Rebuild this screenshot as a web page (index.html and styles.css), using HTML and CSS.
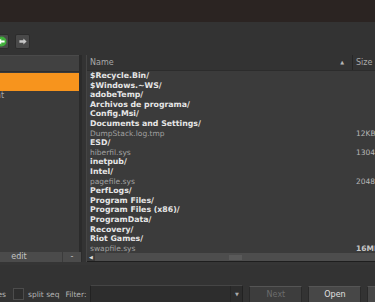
FILE: index.html
```html
<!DOCTYPE html>
<html lang="en">
<head>
  <meta charset="UTF-8" />
  <title>Open File</title>
  <link rel="stylesheet" href="styles.css">
</head>
<body>
  <div class="window">
    <div class="titlebar"></div>

    <!-- Navigation -->
    <div class="toolbar">
      <button class="nav-btn back">
        <svg width="11" height="11" viewBox="0 0 11 11">
          <circle cx="5.5" cy="5.5" r="5" fill="#3fae3a"/>
          <path d="M2.2 5.5 L5.2 2.6 L5.2 4.4 L8.6 4.4 L8.6 6.6 L5.2 6.6 L5.2 8.4 Z" fill="#fff"/>
        </svg>
      </button>
      <button class="nav-btn fwd">
        <svg width="8" height="7" viewBox="0 0 8 7">
          <path d="M7.6 3.5 L4.4 0.4 L4.4 2.3 L0.4 2.3 L0.4 4.7 L4.4 4.7 L4.4 6.6 Z" fill="#c8c8c8"/>
        </svg>
      </button>
    </div>

    <div class="main">
      <!-- Favourites -->
      <div class="places">
        <div class="places-head"></div>
        <div class="places-list">
          <div class="place selected">C:/</div>
          <div class="place">Current</div>
        </div>
        <div class="places-btns">
          <button class="small-btn add">+</button>
          <button class="small-btn edit">edit</button>
          <button class="small-btn remove">-</button>
        </div>
      </div>

      <!-- File list -->
      <div class="files">
        <div class="files-head">
          <div class="col-name">Name <span class="sort">&#9650;</span></div>
          <div class="col-size">Size</div>
        </div>
        <div class="rows">
          <div class="row dir"><span class="col-name">$Recycle.Bin/</span></div>
          <div class="row dir"><span class="col-name">$Windows.~WS/</span></div>
          <div class="row dir"><span class="col-name">adobeTemp/</span></div>
          <div class="row dir"><span class="col-name">Archivos de programa/</span></div>
          <div class="row dir"><span class="col-name">Config.Msi/</span></div>
          <div class="row dir"><span class="col-name">Documents and Settings/</span></div>
          <div class="row"><span class="col-name">DumpStack.log.tmp</span><span class="col-size">12KB</span></div>
          <div class="row dir"><span class="col-name">ESD/</span></div>
          <div class="row"><span class="col-name">hiberfil.sys</span><span class="col-size">1304MB</span></div>
          <div class="row dir"><span class="col-name">inetpub/</span></div>
          <div class="row dir"><span class="col-name">Intel/</span></div>
          <div class="row"><span class="col-name">pagefile.sys</span><span class="col-size">2048MB</span></div>
          <div class="row dir"><span class="col-name">PerfLogs/</span></div>
          <div class="row dir"><span class="col-name">Program Files/</span></div>
          <div class="row dir"><span class="col-name">Program Files (x86)/</span></div>
          <div class="row dir"><span class="col-name">ProgramData/</span></div>
          <div class="row dir"><span class="col-name">Recovery/</span></div>
          <div class="row dir"><span class="col-name">Riot Games/</span></div>
          <div class="row"><span class="col-name">swapfile.sys</span><span class="col-size big">16MB</span></div>
        </div>
        <div class="hscroll">
          <span class="hscroll-arrow">&#9664;</span>
          <span class="hscroll-grip"></span>
        </div>
      </div>
    </div>

    <!-- Bottom bar -->
    <div class="footer">
      <div class="footer-row">
        <span class="label hidden-label">show hidden files</span>
        <span class="checkbox"></span>
        <span class="label">split seq</span>
        <span class="label filter-label">Filter:</span>
        <div class="combo">
          <span class="combo-arrow">&#9660;</span>
        </div>
        <button class="btn disabled">Next</button>
        <button class="btn">Open</button>
        <button class="btn">Cancel</button>
      </div>
    </div>
  </div>
</body>
</html>
```

FILE: styles.css
```css
* {
  box-sizing: border-box;
  margin: 0;
  padding: 0;
}

html, body {
  width: 375px;
  height: 302px;
  overflow: hidden;
}

body {
  font-family: "DejaVu Sans", Verdana, sans-serif;
  font-size: 8px;
  background: #333;
  color: #c8c8c8;
}

button {
  font-family: inherit;
  font-size: 8px;
  border: none;
  background: none;
  color: inherit;
}

.window {
  margin-left: -40px;
  width: 415px;
}

.titlebar {
  height: 22px;
  background: #2b2422;
}

.toolbar {
  height: 30px;
  display: flex;
  align-items: flex-start;
  gap: 6px;
  padding: 12px 0 0 34px;
  background: #333;
}

.nav-btn {
  width: 15px;
  height: 15px;
  display: flex;
  align-items: center;
  justify-content: center;
  background: #494949;
  border: 1px solid #2c2c2c;
  border-radius: 2px;
}

.main {
  height: 210px;
  display: flex;
  padding-top: 3px;
}

/* left favourites */
.places {
  width: 122px;
  flex-shrink: 0;
  display: flex;
  flex-direction: column;
  background: #3b3b3b;
  border-right: 3px solid #2b2b2b;
}

.places-head {
  height: 17px;
  background: #414141;
  border-top: 1px solid #4a4a4a;
  border-bottom: 1px solid #2e2e2e;
}

.places-list {
  flex: 1;
}

.place {
  height: 10px;
  line-height: 10px;
  padding-left: 14px;
  color: #a8a8a8;
}

.place.selected {
  height: 18px;
  margin-top: 1px;
  line-height: 18px;
  background: #f7941d;
  color: #222;
}

.places-btns {
  height: 10px;
  display: flex;
  gap: 1px;
}

.small-btn {
  height: 10px;
  line-height: 10px;
  flex-shrink: 0;
  background: #4b4b4b;
  color: #c4c4c4;
}

.small-btn.add {
  width: 15px;
}

.small-btn.edit {
  width: 86px;
}

.small-btn.remove {
  width: 18px;
}

/* file list */
.files {
  flex: 1;
  display: flex;
  flex-direction: column;
  margin-left: 4px;
  background: #3b3b3b;
  border-left: 1px solid #454545;
}

.files-head {
  height: 16px;
  display: flex;
  background: #333;
  border-bottom: 1px solid #2c2c2c;
  color: #a9a9a9;
}

.files-head .col-name {
  position: relative;
  line-height: 15px;
  border-right: 1px solid #262626;
}

.sort {
  position: absolute;
  right: 8px;
  top: 0;
  font-size: 5px;
  color: #b8b8b8;
}

.files-head .col-size {
  line-height: 15px;
}

.col-name {
  width: 266px;
  flex-shrink: 0;
  padding-left: 3px;
}

.col-size {
  padding-left: 3px;
}

.rows {
  flex: 1;
}

.row {
  display: flex;
  height: 9.6px;
  line-height: 9.6px;
  white-space: nowrap;
  color: #a0a0a0;
  font-size: 7.5px;
}

.row.dir {
  font-weight: bold;
  font-size: 7.8px;
  color: #e6e6e6;
}

.row .col-size {
  color: #b8b8b8;
}

.row .col-size.big {
  font-weight: bold;
  color: #c8c8c8;
}

.hscroll {
  position: relative;
  height: 9px;
  background: #4d4d4d;
  border-bottom: 1px solid #1e1e1e;
}

.hscroll-arrow {
  display: block;
  width: 8px;
  height: 8px;
  line-height: 8px;
  font-size: 5px;
  text-align: center;
  background: #3a3a3a;
  color: #ddd;
}

.hscroll-grip {
  position: absolute;
  left: 142px;
  top: 2px;
  width: 13px;
  height: 5px;
  background-image: radial-gradient(circle, #6a6a6a 0.6px, transparent 0.8px);
  background-size: 2px 2px;
}

/* bottom bar */
.footer {
  height: 40px;
  border-top: 3px solid #353535;
  background: #333;
  padding-top: 20px;
}

.footer-row {
  display: flex;
  align-items: center;
  height: 18px;
  white-space: nowrap;
}

.footer-row > * {
  flex-shrink: 0;
}

.label {
  color: #b4b4b4;
  font-size: 7.5px;
}

.hidden-label {
  width: 46px;
  overflow: hidden;
  text-align: right;
  direction: rtl;
}

.checkbox {
  width: 11px;
  height: 12px;
  margin-left: 7px;
  background: #2e2e2e;
  border: 1px solid #4c4c4c;
}

.checkbox + .label {
  margin-left: 4px;
}

.filter-label {
  margin-left: 6px;
}

.combo {
  position: relative;
  width: 153px;
  height: 18px;
  margin-left: 4px;
  background: #2d2d2d;
  border: 1px solid #222;
  border-top-color: #454545;
}

.combo-arrow {
  position: absolute;
  right: 0;
  top: 0;
  width: 12px;
  height: 16px;
  line-height: 16px;
  text-align: center;
  font-size: 5px;
  color: #aaa;
  border-left: 1px solid #262626;
}

.btn {
  width: 53px;
  height: 17px;
  margin-left: 6px;
  background: #474747;
  border: 1px solid #2a2a2a;
  border-top-color: #555;
  font-size: 8px;
  color: #e0e0e0;
}

.btn.disabled {
  background: #3d3d3d;
  color: #6c6c6c;
}
```
